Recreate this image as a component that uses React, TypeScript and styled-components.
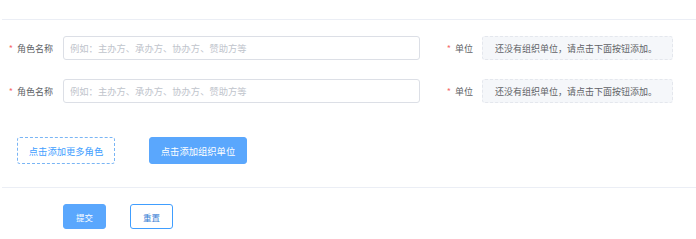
import React from "react";
import styled, { createGlobalStyle, css } from "styled-components";

const GlobalStyle = createGlobalStyle`
  body {
    margin: 0;
    background: #fff;
    font-family: "Noto Sans CJK SC", "Noto Sans", sans-serif;
  }
`;

const Page = styled.div`
  width: 696px;
  height: 239px;
  padding: 19px 0 0 2px;
  box-sizing: border-box;
  overflow: hidden;
`;

const FormSection = styled.div`
  border-top: 1px solid #ebeef5;
  padding: 16px 0 23px;
`;

const Row = styled.div`
  display: flex;
  align-items: center;
  height: 24px;
  margin-bottom: 19px;
`;

const Label = styled.label<{ $width: number; $pad: number }>`
  width: ${(p) => p.$width}px;
  padding-right: ${(p) => p.$pad}px;
  box-sizing: border-box;
  display: flex;
  justify-content: flex-end;
  align-items: center;
  font-size: 9px;
  color: #606266;
  white-space: nowrap;
`;

const Star = styled.span`
  color: #f56c6c;
  margin-right: 4px;
  font-size: 9px;
`;

const TextInput = styled.input`
  width: 357px;
  height: 24px;
  box-sizing: border-box;
  border: 1px solid #dcdfe6;
  border-radius: 3px;
  padding: 0 6px;
  font-family: inherit;
  font-size: 9.3px;
  color: #606266;
  outline: none;

  &::placeholder {
    color: #c0c4cc;
  }
`;

const UnitBox = styled.div`
  width: 191px;
  height: 24px;
  box-sizing: border-box;
  border: 1px dashed #e4e7ed;
  border-radius: 3px;
  background: #f5f7fa;
  padding-left: 12px;
  display: flex;
  align-items: center;
  font-size: 9px;
  color: #606266;
  white-space: nowrap;
`;

const Actions = styled.div`
  display: flex;
  gap: 34px;
  padding-left: 15px;
  margin-top: 34px;
`;

type Variant = "dashed" | "primary" | "plain";

const Button = styled.button<{ $variant: Variant; $w: number; $h: number; $fs?: number }>`
  width: ${(p) => p.$w}px;
  height: ${(p) => p.$h}px;
  box-sizing: border-box;
  border-radius: 3px;
  font-family: inherit;
  font-size: ${(p) => p.$fs ?? 9.3}px;
  padding: 0;
  cursor: pointer;
  ${(p) =>
    p.$variant === "dashed" &&
    css`
      background: #fff;
      border: 1px dashed #79b5f5;
      color: #409eff;
    `}
  ${(p) =>
    p.$variant === "primary" &&
    css`
      background: #5aa7fd;
      border: 1px solid #5aa7fd;
      color: #fff;
    `}
  ${(p) =>
    p.$variant === "plain" &&
    css`
      background: #fff;
      border: 1px solid #409eff;
      color: #3a7fd5;
    `}
`;

const Footer = styled.div`
  border-top: 1px solid #ebeef5;
  padding: 16px 0 0 61px;
  display: flex;
  gap: 24px;
`;

const rows = [0, 1];

export default function App() {
  return (
    <Page>
      <GlobalStyle />
      <FormSection>
        {rows.map((i) => (
          <Row key={i}>
            <Label $width={61} $pad={10}>
              <Star>*</Star>角色名称
            </Label>
            <TextInput placeholder="例如：主办方、承办方、协办方、赞助方等" />
            <Label $width={62} $pad={9}>
              <Star>*</Star>单位
            </Label>
            <UnitBox>还没有组织单位，请点击下面按钮添加。</UnitBox>
          </Row>
        ))}
        <Actions>
          <Button $variant="dashed" $w={98} $h={27}>点击添加更多角色</Button>
          <Button $variant="primary" $w={98} $h={27}>点击添加组织单位</Button>
        </Actions>
      </FormSection>
      <Footer>
        <Button $variant="primary" $w={43} $h={25} $fs={8.5}>提交</Button>
        <Button $variant="plain" $w={43} $h={25} $fs={8.5}>重置</Button>
      </Footer>
    </Page>
  );
}
